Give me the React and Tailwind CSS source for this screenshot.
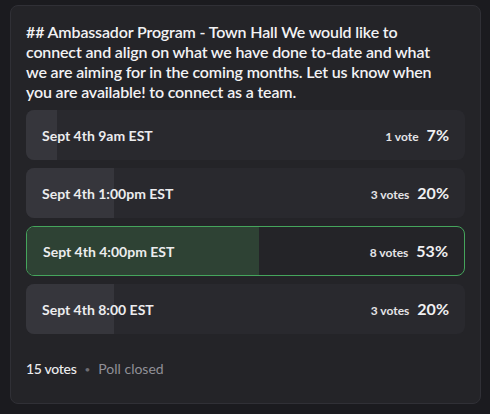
const options = [
  { label: 'Sept 4th 9am EST', votes: '1 vote', pct: 7 },
  { label: 'Sept 4th 1:00pm EST', votes: '3 votes', pct: 20 },
  { label: 'Sept 4th 4:00pm EST', votes: '8 votes', pct: 53, winner: true },
  { label: 'Sept 4th 8:00 EST', votes: '3 votes', pct: 20 },
]

function PollOption({ label, votes, pct, winner }) {
  return (
    <div
      className={`relative h-[50px] rounded-lg overflow-hidden flex items-center justify-between px-4 ${
        winner ? 'bg-[#242428] border border-[#45a55c]' : 'bg-[#29292e]'
      }`}
    >
      {/* progress fill */}
      <div
        className={`absolute left-0 top-0 bottom-0 ${winner ? 'bg-[#2e4234]' : 'bg-[#36363c]'}`}
        style={{ width: `${pct}%` }}
      />
      <span className="relative text-[14px] font-bold text-[#ececee]">{label}</span>
      <div className="relative flex items-baseline gap-2">
        <span className="text-[12px] font-bold text-[#e4e4e7]">{votes}</span>
        <span className="text-[16px] font-bold text-[#f0f0f2]">{pct}%</span>
      </div>
    </div>
  )
}

export default function App() {
  return (
    <div
      className="w-[490px] h-[414px] bg-[#1b1b1f] pt-[5px] pl-[10px]"
      style={{ fontFamily: 'Lato, "Noto Sans", sans-serif' }}
    >
      <div className="w-[471px] h-[399px] rounded-lg bg-[#242428] border border-[#303036] px-[15px] pt-[16px]">
        <p className="text-[16px] leading-[20px] font-semibold tracking-[-0.15px] text-[#f2f2f4] whitespace-nowrap">
          ## Ambassador Program - Town Hall We would like to
          <br />
          connect and align on what we have done to-date and what
          <br />
          we are aiming for in the coming months. Let us know when
          <br />
          you are available! to connect as a team.
        </p>

        <div className="mt-2 flex flex-col gap-2">
          {options.map((o) => (
            <PollOption key={o.label} {...o} />
          ))}
        </div>

        <div className="mt-[25px] flex items-center text-[14px] leading-[20px]">
          <span className="font-medium tracking-[-0.3px] text-[#ececee]">15 votes</span>
          <span className="mx-[8px] text-[10px] text-[#6d6d74]">•</span>
          <span className="text-[#909097]">Poll closed</span>
        </div>
      </div>
    </div>
  )
}
